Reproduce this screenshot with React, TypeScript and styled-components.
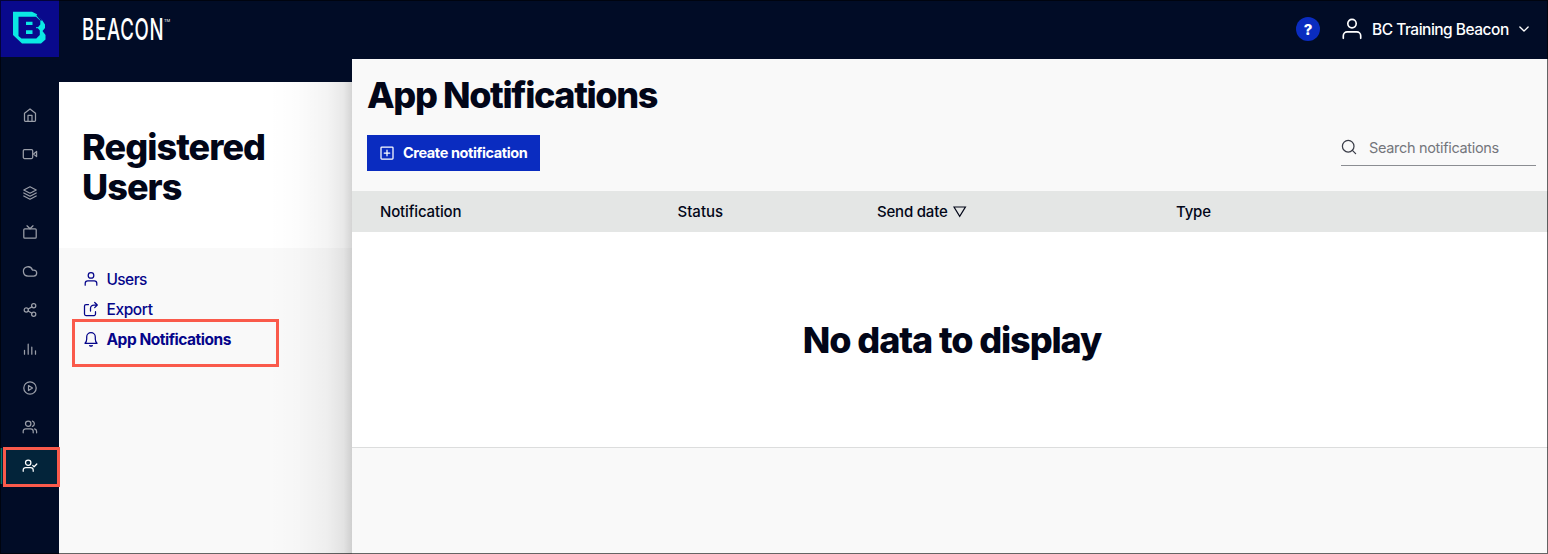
import React from "react";
import styled, { createGlobalStyle } from "styled-components";

const GlobalStyle = createGlobalStyle`
  * { box-sizing: border-box; }
  body { margin: 0; background: #010c26; font-family: Inter, "Liberation Sans", sans-serif; color: #020618; }
  h1, h2, p { margin: 0; }
  button { font: inherit; }
`;

const Page = styled.div`
  position: relative;
  width: 1548px;
  height: 554px;
  display: flex;
  overflow: hidden;
  background: #010c26;
`;
const Frame = styled.div`
  position: absolute;
  inset: 0;
  border: 1px solid rgba(0, 0, 0, 0.6);
  pointer-events: none;
  z-index: 5;
`;
const Rail = styled.nav`
  width: 59px;
  flex: none;
  display: flex;
  flex-direction: column;
`;
const LogoTile = styled.div`
  height: 57px;
  background: #09098c;
  margin-bottom: 40px;
  flex: none;
`;
const RailItem = styled.a<{ $active?: boolean }>`
  position: relative;
  height: 36px;
  margin-bottom: 3px;
  display: flex;
  align-items: center;
  padding-left: 20px;
  color: ${(p) => (p.$active ? "#ffffff" : "#9a9ea8")};
  background: ${(p) => (p.$active ? "#03243a" : "transparent")};
  border-left: 2px solid ${(p) => (p.$active ? "#08736f" : "transparent")};
`;
const Highlight = styled.span<{ $inset: string; $w: number }>`
  position: absolute;
  inset: ${(p) => p.$inset};
  border: ${(p) => p.$w}px solid #fa5a4b;
  pointer-events: none;
  z-index: 3;
`;
const Body = styled.div`
  flex: 1;
  display: flex;
  flex-direction: column;
`;
const TopBar = styled.header`
  height: 59px;
  flex: none;
  display: flex;
  align-items: center;
  padding: 0 18px 1px 23px;
  color: #fff;
`;
const Wordmark = styled.div`
  display: flex;
  width: 1212px;
  align-items: flex-start;
`;
const WordmarkText = styled.span`
  font-size: 30px;
  line-height: 36px;
  width: 82px;
  white-space: nowrap;
  letter-spacing: 1.2px;
  transform: scaleX(0.62);
  transform-origin: 0 0;
  font-weight: 450;
`;
const Trademark = styled.span`
  font-size: 4px;
  line-height: 5px;
  padding-top: 7px;
`;
const Help = styled.span`
  width: 24px;
  height: 24px;
  margin-left: 2px;
  border-radius: 50%;
  background: #0a2cc0;
  display: flex;
  align-items: center;
  justify-content: center;
  font-size: 15px;
  font-weight: 800;
`;
const Account = styled.div`
  display: flex;
  align-items: center;
  margin-left: 20px;
  font-size: 15.5px;
  white-space: nowrap;
`;
const AccountName = styled.span`
  width: 137px;
  margin: 0 9px 0 8px;
  letter-spacing: -0.5px;
  font-weight: 450;
`;
const Columns = styled.div`
  flex: 1;
  display: flex;
  align-items: stretch;
`;
const Side = styled.aside`
  width: 293px;
  margin-top: 23px;
  background: #f9f9f9;
  position: relative;
`;
const SideHead = styled.div`
  height: 166px;
  background: #fff;
  padding: 45px 23px 0;
`;
const Heading = styled.h1<{ $ls: number }>`
  font-size: 36px;
  line-height: 40px;
  font-weight: 800;
  letter-spacing: ${(p) => p.$ls}px;
  white-space: nowrap;
`;
const SideShade = styled.div`
  position: absolute;
  top: 0;
  right: 0;
  bottom: 0;
  width: 84px;
  background: linear-gradient(to right, rgba(0,0,0,0), rgba(0,0,0,0.012) 35%, rgba(0,0,0,0.045) 70%, rgba(0,0,0,0.09) 90%, rgba(0,0,0,0.17));
`;
const SideList = styled.div`
  padding: 16px 23px 16px 23.5px;
  position: relative;
`;
const SideLink = styled.a<{ $bold?: boolean; $ls: number }>`
  height: 30px;
  display: flex;
  align-items: center;
  gap: 8px;
  color: #05058a;
  font-size: 15.5px;
  font-weight: ${(p) => (p.$bold ? 700 : 450)};
  letter-spacing: ${(p) => p.$ls}px;
`;
const Main = styled.main`
  flex: 1;
  background: #f9f9f9;
`;
const MainHead = styled.div`
  height: 132px;
  padding: 16px 12px 0 15px;
`;
const Actions = styled.div`
  display: flex;
  justify-content: space-between;
  padding-top: 20px;
`;
const CreateButton = styled.button`
  width: 173px;
  height: 35.5px;
  padding: 0 0 0 12px;
  border: 0;
  background: #0a2cc0;
  color: #fff;
  display: flex;
  align-items: center;
  gap: 8px;
  font-size: 14.5px;
  font-weight: 700;
  letter-spacing: -0.4px;
  white-space: nowrap;
`;
const Search = styled.label`
  width: 195px;
  height: 31px;
  border-bottom: 1px solid #8b8d92;
  display: flex;
  align-items: center;
  gap: 12px;
  padding-bottom: 6px;
  color: #74767c;
  font-size: 14.5px;
  letter-spacing: -0.32px;
  white-space: nowrap;
`;
const SearchGlyph = styled.span`
  display: flex;
  color: #3a3d48;
`;
const TableHead = styled.div`
  height: 41px;
  display: grid;
  grid-template-columns: 297.5px 199.5px 299px 1fr;
  align-items: center;
  padding-left: 28px;
  background: #e4e6e5;
  font-size: 15px;
  font-weight: 450;
`;
const Cell = styled.span<{ $ls?: number }>`
  display: flex;
  align-items: center;
  gap: 5px;
  letter-spacing: ${(p) => p.$ls ?? 0}px;
`;
const Empty = styled.div`
  height: 216px;
  background: #fff;
  border-bottom: 1px solid #dcdddd;
  display: flex;
  align-items: center;
  justify-content: center;
  padding-left: 4px;
`;

const Svg = styled.svg`
  flex: none;
`;

const Icon = ({ size = 16, sw = 1.25, children }: { size?: number; sw?: number; children: React.ReactNode }) => (
  <Svg width={size} height={size} viewBox="0 0 16 16" fill="none" stroke="currentColor" strokeWidth={sw} strokeLinecap="round" strokeLinejoin="round">
    {children}
  </Svg>
);

const railIcons: React.ReactNode[] = [
  <><path d="M2.5 6.2 8 1.9l5.5 4.3v7.3a.8.8 0 0 1-.8.8H3.3a.8.8 0 0 1-.8-.8z" /><path d="M6 14.2V8.3h4v5.9" /></>,
  <><rect x="1.3" y="3.5" width="9.4" height="9" rx="1.2" /><path d="m11.6 8 3-2.6v5.2z" /></>,
  <><path d="M8 1.8 14.2 5 8 8.2 1.8 5z" /><path d="m1.8 8 6.2 3.2L14.2 8" /><path d="m1.8 11 6.2 3.2 6.2-3.2" /></>,
  <><rect x="1.8" y="4.8" width="12.4" height="9.4" rx="1" /><path d="M5 1.8 8 4.8l3-3" /></>,
  <path d="M11.7 13H6a4.6 4.6 0 1 1 4.4-6h1.3a3 3 0 0 1 0 6z" />,
  <><circle cx="4.3" cy="8" r="2.1" /><circle cx="11.7" cy="3.8" r="2.1" /><circle cx="11.7" cy="12.3" r="2.1" /><path d="m6.2 7 3.7-2.1M6.2 9l3.7 2.2" /></>,
  <path d="M2.5 13.2V9.3M6.2 13.2V3.2M9.8 13.2V6.2M13.5 13.2V9.8" />,
  <><circle cx="8" cy="8" r="6.2" /><path d="m6.5 5.5 4 2.5-4 2.5z" /></>,
  <><circle cx="6.2" cy="4.7" r="2.7" /><path d="M1.2 13.8v-1.5a2.5 2.5 0 0 1 2.5-2.5h5a2.5 2.5 0 0 1 2.5 2.5v1.5M10.4 2.1a2.7 2.7 0 0 1 0 5.2M12.6 9.9a2.6 2.6 0 0 1 2 2.5v1.4" /></>,
  <><circle cx="6.2" cy="4.7" r="2.7" /><path d="M1.2 13.3V12a2.5 2.5 0 0 1 2.5-2.5h5a2.5 2.5 0 0 1 2.5 2.5v1.3M10.7 7.4l1.4 1.4 2.7-2.8" /></>,
];

const userPath = <><circle cx="8" cy="4.4" r="2.8" /><path d="M2.2 14.2v-1.7a2.6 2.6 0 0 1 2.6-2.6h6.4a2.6 2.6 0 0 1 2.6 2.6v1.7" /></>;

export default function App() {
  return (
    <Page>
      <GlobalStyle />
      <Rail>
        <LogoTile>
          <Svg width="59" height="57" viewBox="0 0 59 57">
            <path d="M13 11.8h19l4.500 2.200L42 20l3 4.500v3.500L42.500 31l3 4v4.500l-4.500 4H22L13 35z" fill="#0be8e4" />
            <path d="M18.500 16.800H36l4.300 4v3.700L37.500 27.700l2.300 2.800v4.500l-3.500 3.500H21.500l-3-2.500z" fill="#09098c" />
            <path d="M26 21.800h6.500v3.200H26zM26 30.300h6.500v3.600H26z" fill="#0be8e4" />
            <path d="M37 15 41.500 20.500" stroke="#09098c" strokeWidth="1.5" />
            <path d="M36 27.700h4" stroke="#0be8e4" strokeWidth="1" />
          </Svg>
        </LogoTile>
        {railIcons.map((icon, i) => (
          <RailItem key={i} $active={i === 9}>
            <Icon>{icon}</Icon>
            {i === 9 && <Highlight $inset="-1px -1px -3px 1px" $w={3} />}
          </RailItem>
        ))}
      </Rail>
      <Body>
        <TopBar>
          <Wordmark>
            <WordmarkText>BEACON</WordmarkText>
            <Trademark>TM</Trademark>
          </Wordmark>
          <Help>?</Help>
          <Account>
            <Icon size={24} sw={1.1}>{userPath}</Icon>
            <AccountName>BC Training Beacon</AccountName>
            <Icon size={12} sw={1.8}><path d="m2.5 5.3 5.5 5.5 5.5-5.5" /></Icon>
          </Account>
        </TopBar>
        <Columns>
          <Side>
            <SideHead>
              <Heading $ls={-0.95}>Registered<br />Users</Heading>
            </SideHead>
            <SideList>
              <SideLink $ls={-0.6}><Icon>{userPath}</Icon>Users</SideLink>
              <SideLink $ls={-0.4}>
                <Icon><path d="M5.5 3.5H3A1.5 1.5 0 0 0 1.5 5v8A1.5 1.5 0 0 0 3 14.5h8a1.5 1.5 0 0 0 1.5-1.5v-2.3M7.5 10V7.5a3.5 3.5 0 0 1 3.5-3.5h3.2M11.7 1.5 14.3 4l-2.6 2.6" /></Icon>
                Export
              </SideLink>
              <SideLink $ls={-0.47} $bold>
                <Icon><path d="M2 12.3c1-.9 1.7-2.3 1.7-4.3V6a4.3 4.3 0 0 1 8.6 0v2c0 2 .7 3.4 1.7 4.3zM6.7 14.6c.8.5 1.8.5 2.6 0" /></Icon>
                App Notifications
              </SideLink>
              <Highlight $inset="71px 73px 3px 13px" $w={3} />
            </SideList>
            <SideShade />
          </Side>
          <Main>
            <MainHead>
              <Heading $ls={-1.37}>App Notifications</Heading>
              <Actions>
                <CreateButton>
                  <Icon><rect x="2" y="2" width="12" height="12" rx="0.8" /><path d="M8 5.2v5.6M5.2 8h5.6" /></Icon>
                  Create notification
                </CreateButton>
                <Search>
                  <SearchGlyph>
                    <Icon><circle cx="7.2" cy="7.2" r="5.8" /><path d="m11.4 11.4 3.2 3.2" /></Icon>
                  </SearchGlyph>
                  Search notifications
                </Search>
              </Actions>
            </MainHead>
            <TableHead>
              <Cell $ls={-0.15}>Notification</Cell>
              <Cell>Status</Cell>
              <Cell $ls={-0.2}>Send date
                <Svg width="14" height="12" viewBox="0 0 14 12" fill="none" stroke="currentColor" strokeWidth="1.2"><path d="M1 1h11.4L6.7 10.3z" /></Svg>
              </Cell>
              <Cell $ls={-0.2}>Type</Cell>
            </TableHead>
            <Empty><Heading $ls={-1.1}>No data to display</Heading></Empty>
          </Main>
        </Columns>
      </Body>
      <Frame />
    </Page>
  );
}
